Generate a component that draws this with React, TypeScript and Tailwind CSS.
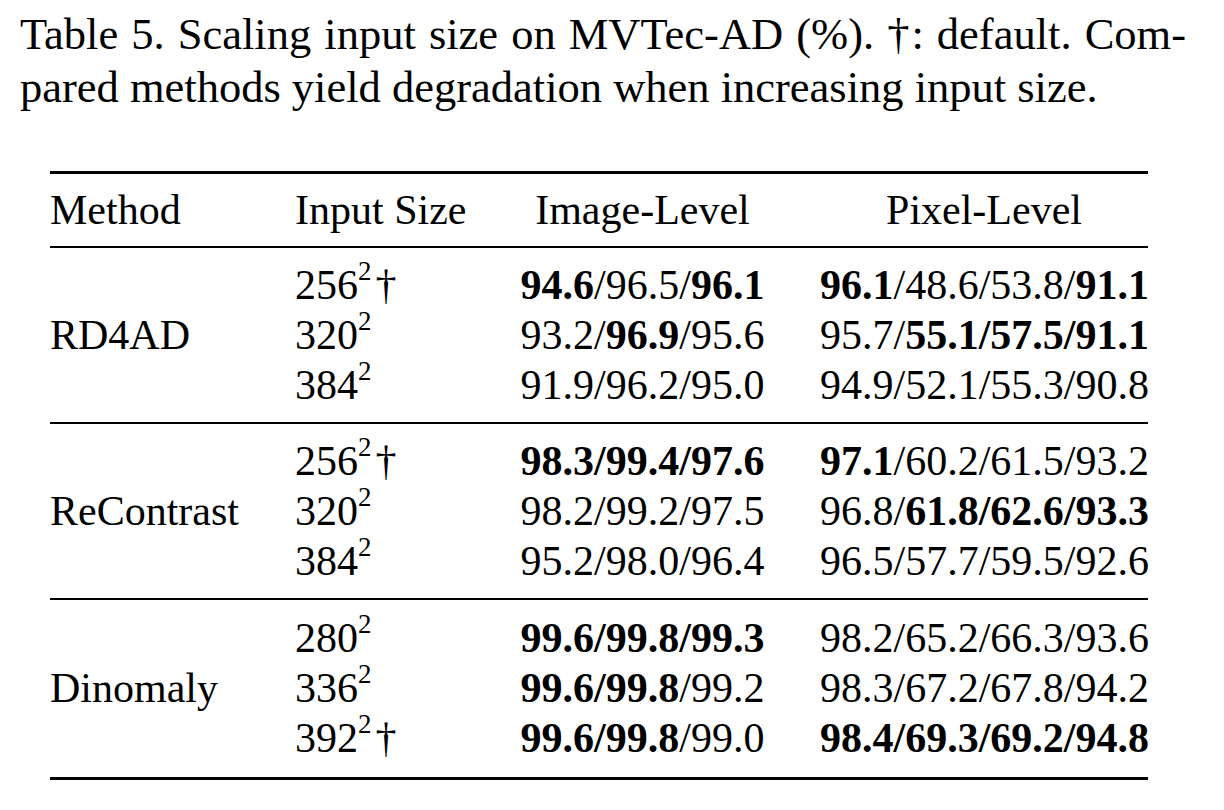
import React from 'react';

type Seg = { t: string; b?: boolean };
type Row = { size: string; dagger?: boolean; img: Seg[]; pix: Seg[] };
type Group = { method: string; rows: Row[] };

// pieces starting with * are bold
const parse = (s: string): Seg[] =>
    s.split('|').map((p) => (p.startsWith('*') ? { t: p.slice(1), b: true } : { t: p }));

const GROUPS: Group[] = [
    {
        method: 'RD4AD',
        rows: [
            { size: '256', dagger: true, img: parse('*94.6|/96.5/|*96.1'), pix: parse('*96.1|/48.6/53.8/|*91.1') },
            { size: '320', img: parse('93.2/|*96.9|/95.6'), pix: parse('95.7/|*55.1/57.5/91.1') },
            { size: '384', img: parse('91.9/96.2/95.0'), pix: parse('94.9/52.1/55.3/90.8') },
        ],
    },
    {
        method: 'ReContrast',
        rows: [
            { size: '256', dagger: true, img: parse('*98.3/99.4/97.6'), pix: parse('*97.1|/60.2/61.5/93.2') },
            { size: '320', img: parse('98.2/99.2/97.5'), pix: parse('96.8/|*61.8/62.6/93.3') },
            { size: '384', img: parse('95.2/98.0/96.4'), pix: parse('96.5/57.7/59.5/92.6') },
        ],
    },
    {
        method: 'Dinomaly',
        rows: [
            { size: '280', img: parse('*99.6/99.8/99.3'), pix: parse('98.2/65.2/66.3/93.6') },
            { size: '336', img: parse('*99.6/99.8|/99.2'), pix: parse('98.3/67.2/67.8/94.2') },
            { size: '392', dagger: true, img: parse('*99.6/99.8|/99.0'), pix: parse('*98.4/69.3/69.2/94.8') },
        ],
    },
];

const Cell: React.FC<{ segs: Seg[] }> = ({ segs }) => (
    <span className="whitespace-nowrap">
        {segs.map((s, i) => (
            <span key={i} className={s.b ? 'font-bold' : ''}>
                {s.t}
            </span>
        ))}
    </span>
);

const Size: React.FC<{ n: string; dagger?: boolean }> = ({ n, dagger }) => (
    <span className="whitespace-nowrap">
        {n}
        <sup className="text-[27px] top-[-19px]">2</sup>
        {dagger && <span className="ml-[4px]">†</span>}
    </span>
);

const cols = 'grid grid-cols-[245px_225px_245px_55px_328px]';

const App: React.FC = () => {
    return (
        <div className="w-[1224px] h-[810px] bg-white text-black overflow-hidden font-['Liberation_Serif','Times_New_Roman',serif] text-[42px]">
            <div className="pl-[20px] pr-[38px] pt-[8px] text-[44.5px] leading-[53px]">
                <div className="text-justify [text-align-last:justify]">
                    Table 5. Scaling input size on MVTec-AD (%). †: default. Com-
                </div>
                <div>pared methods yield degradation when increasing input size.</div>
            </div>

            <div className="mx-[50px] mt-[57px] w-[1098px]">
                <div className="h-[3px] bg-black" />
                <div className={`${cols} h-[72px] items-center leading-[72px]`}>
                    <span>Method</span>
                    <span>Input Size</span>
                    <span className="text-center">Image-Level</span>
                    <span />
                    <span className="text-center">Pixel-Level</span>
                </div>
                {GROUPS.map((g, gi) => (
                    <div key={g.method}>
                        <div className="h-[2px] bg-black" />
                        <div className={`${cols} leading-[50px] ${gi === 2 ? 'pt-[13px] pb-[14px]' : 'py-[12px]'}`}>
                            <span className="row-span-3 self-center">{g.method}</span>
                            {g.rows.map((r, i) => (
                                <React.Fragment key={i}>
                                    <span className="col-start-2">
                                        <Size n={r.size} dagger={r.dagger} />
                                    </span>
                                    <span className="text-center">
                                        <Cell segs={r.img} />
                                    </span>
                                    <span />
                                    <span className="text-center">
                                        <Cell segs={r.pix} />
                                    </span>
                                </React.Fragment>
                            ))}
                        </div>
                    </div>
                ))}
                <div className="h-[3px] bg-black" />
            </div>
        </div>
    );
};

export default App;
